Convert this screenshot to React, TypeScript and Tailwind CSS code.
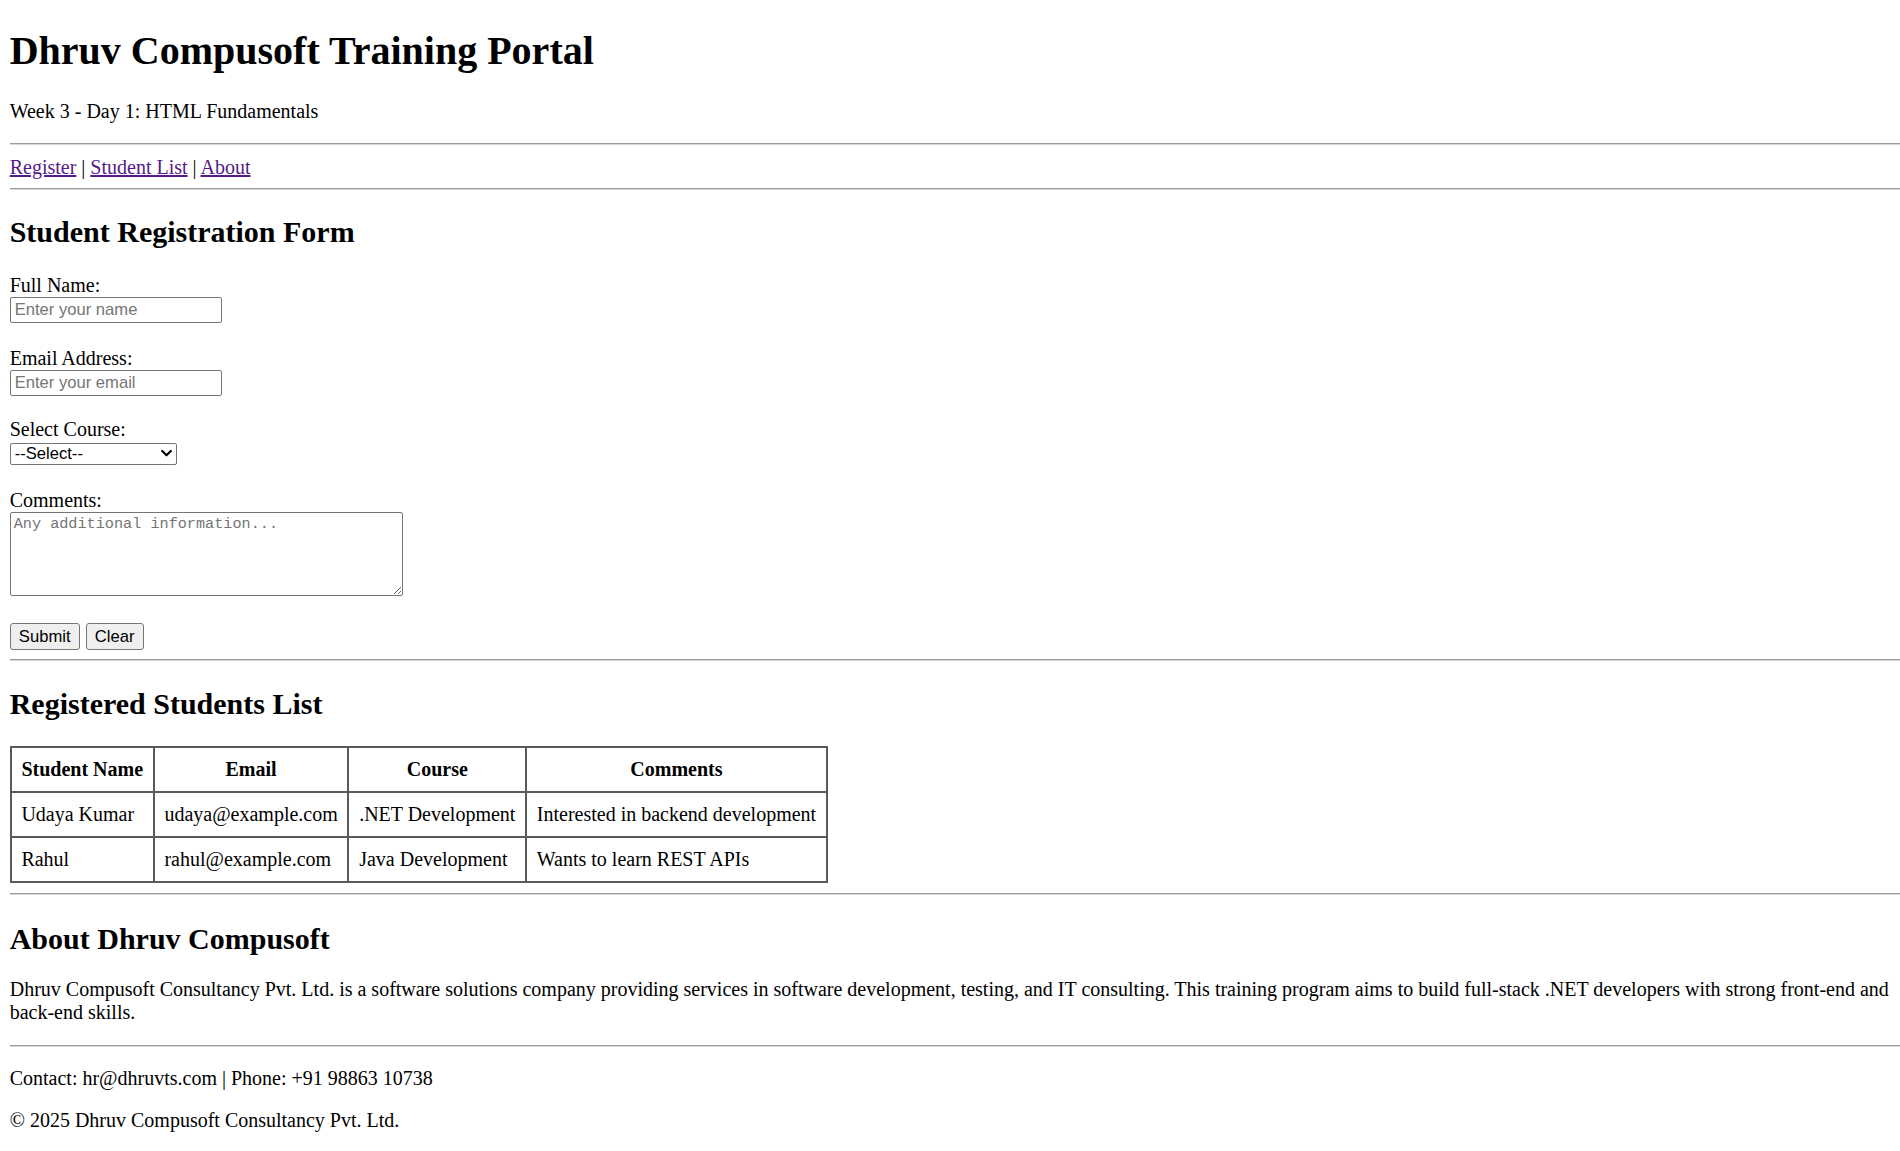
import React from 'react'

const students = [
  { name: 'Udaya Kumar', email: 'udaya@example.com', course: '.NET Development', comments: 'Interested in backend development' },
  { name: 'Rahul', email: 'rahul@example.com', course: 'Java Development', comments: 'Wants to learn REST APIs' }
]

// the rules run to the right edge of the window
const Rule = ({ className = '' }: { className?: string }) => (
  <hr className={`-mr-[9.7px] h-[2px] border-0 border-t border-b border-t-[#9a9a9a] border-b-[#d8d8d8] ${className}`} />
)

const App: React.FC = () => {
  return (
    <div className="min-h-screen overflow-hidden bg-white px-[9.7px] pt-[28px] pb-[20px] text-black font-['Liberation_Serif','Times_New_Roman',serif] text-[20px] leading-[23px]">
      <header>
        <h1 className="text-[40px] leading-[46px] font-bold">Dhruv Compusoft Training Portal</h1>
        <p className="mt-[26px]">Week 3 - Day 1: HTML Fundamentals</p>
      </header>

      <Rule className="mt-[20.2px]" />

      <nav className="mt-[10.5px]">
        <a href="#register" className="text-[#551a8b] underline">Register</a> |{' '}
        <a href="#students" className="text-[#551a8b] underline">Student List</a> |{' '}
        <a href="#about" className="text-[#551a8b] underline">About</a>
      </nav>

      <Rule className="mt-[9.3px]" />

      {/* registration form */}
      <section id="register">
        <h2 className="mt-[25.3px] text-[30px] leading-[34.5px] font-bold">Student Registration Form</h2>
        <form onSubmit={(e) => e.preventDefault()}>
          <label className="mt-[24.6px] block">Full Name:</label>
          <input
            type="text"
            placeholder="Enter your name"
            className="block h-[26px] w-[212px] rounded-[2px] border border-[#767676] px-[4px] font-['Liberation_Sans',Arial,sans-serif] text-[16.6px] placeholder:text-[#757575]"
          />

          <label className="mt-[23.7px] block">Email Address:</label>
          <input
            type="email"
            placeholder="Enter your email"
            className="block h-[26px] w-[212px] rounded-[2px] border border-[#767676] px-[4px] font-['Liberation_Sans',Arial,sans-serif] text-[16.6px] placeholder:text-[#757575]"
          />

          <label className="mt-[22.3px] block">Select Course:</label>
          <div className="relative mt-[2px] w-[167px]">
            <select className="block h-[22px] w-full appearance-none rounded-[2px] border border-[#767676] bg-white pl-[4px] font-['Liberation_Sans',Arial,sans-serif] text-[16.6px] leading-[20px]">
              <option>--Select--</option>
              <option>.NET Development</option>
              <option>Java Development</option>
              <option>Python Development</option>
            </select>
            <svg className="pointer-events-none absolute right-[5px] top-[6px]" width="11" height="9" viewBox="0 0 11 9" fill="none">
              <path d="M1.2 2 L5.5 6.3 L9.8 2" stroke="#000" strokeWidth="2.2" strokeLinecap="round" strokeLinejoin="round" />
            </svg>
          </div>

          <label className="mt-[23.4px] block">Comments:</label>
          <textarea
            placeholder="Any additional information..."
            className="block h-[84px] w-[393px] rounded-[2px] border border-[#767676] px-[3px] py-[2px] font-['Liberation_Mono','DejaVu_Sans_Mono',monospace] text-[15.2px] leading-[18px] placeholder:text-[#757575]"
          />

          <div className="mt-[26.9px] flex gap-[6px] font-['Liberation_Sans',Arial,sans-serif] text-[16.6px]">
            <button type="submit" className="h-[27px] w-[70px] rounded-[3px] border border-[#767676] bg-[#efefef]">Submit</button>
            <button type="reset" className="h-[27px] w-[58px] rounded-[3px] border border-[#767676] bg-[#efefef]">Clear</button>
          </div>
        </form>
      </section>

      <Rule className="mt-[9.6px]" />

      {/* students table */}
      <section id="students">
        <h2 className="mt-[25.3px] text-[30px] leading-[34.5px] font-bold">Registered Students List</h2>
        <table className="mt-[25.1px] border-collapse border-2 border-[#4a4a4a]">
          <thead>
            <tr>
              <th className="border-2 border-[#5a5a5a] px-[9.7px] py-[10px] font-bold">Student Name</th>
              <th className="border-2 border-[#5a5a5a] px-[9.7px] py-[10px] font-bold">Email</th>
              <th className="border-2 border-[#5a5a5a] px-[9.7px] py-[10px] font-bold">Course</th>
              <th className="border-2 border-[#5a5a5a] px-[9.7px] py-[10px] font-bold">Comments</th>
            </tr>
          </thead>
          <tbody>
            {students.map((s) => (
              <tr key={s.email}>
                <td className="border-2 border-[#5a5a5a] px-[9.7px] py-[10px]">{s.name}</td>
                <td className="border-2 border-[#5a5a5a] px-[9.7px] py-[10px]">{s.email}</td>
                <td className="border-2 border-[#5a5a5a] px-[9.7px] py-[10px]">{s.course}</td>
                <td className="border-2 border-[#5a5a5a] px-[9.7px] py-[10px]">{s.comments}</td>
              </tr>
            ))}
          </tbody>
        </table>
      </section>

      <Rule className="mt-[10px]" />

      <section id="about">
        <h2 className="mt-[26.6px] text-[30px] leading-[34.5px] font-bold">About Dhruv Compusoft</h2>
        <p className="mt-[22px]">
          Dhruv Compusoft Consultancy Pvt. Ltd. is a software solutions company providing services in software development, testing, and IT consulting. This training program aims to build full-stack .NET developers with strong front-end and back-end skills.
        </p>
      </section>

      <Rule className="mt-[20.3px]" />

      <footer>
        <p className="mt-[20.2px]">Contact: hr@dhruvts.com | Phone: +91 98863 10738</p>
        <p className="mt-[19.4px]">© 2025 Dhruv Compusoft Consultancy Pvt. Ltd.</p>
      </footer>
    </div>
  )
}

export default App
